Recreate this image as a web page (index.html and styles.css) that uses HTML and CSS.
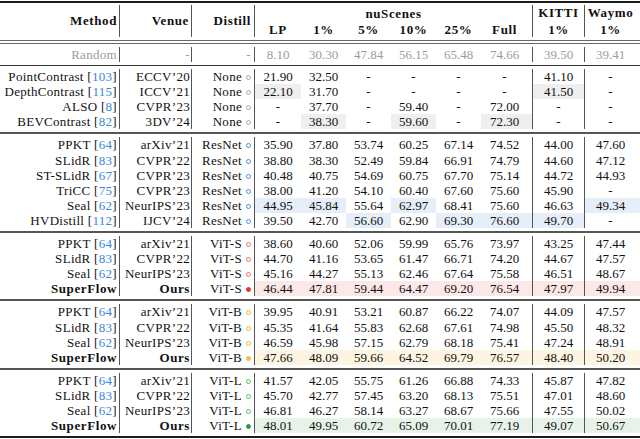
FILE: index.html
```html
<!DOCTYPE html>
<html lang="en">
<head>
<meta charset="utf-8">
<title>SuperFlow comparison table</title>
<link rel="stylesheet" href="styles.css">
</head>
<body>
<div class="tbl">
  <div class="rule top"></div>

  <div class="head">
    <div class="hc c-method span2">Method</div>
    <div class="hc c-venue span2">Venue</div>
    <div class="hc c-distill span2">Distill</div>
    <div class="hc nus">nuScenes</div>
    <div class="hc c-kitti">KITTI</div>
    <div class="hc c-waymo">Waymo</div>
    <div class="hc num">LP</div>
    <div class="hc num">1%</div>
    <div class="hc num">5%</div>
    <div class="hc num">10%</div>
    <div class="hc num">25%</div>
    <div class="hc num c-full">Full</div>
    <div class="hc num c-kitti">1%</div>
    <div class="hc num c-waymo">1%</div>
  </div>

  <div class="rule double"></div>

  <div class="group gray-text">
    <div class="row">
      <div class="c-method">Random</div><div class="c-venue">-</div><div class="c-distill">-</div>
      <div>8.10</div><div>30.30</div><div>47.84</div><div>56.15</div><div>65.48</div><div class="c-full">74.66</div><div class="c-kitti">39.50</div><div class="c-waymo">39.41</div>
    </div>
  </div>

  <div class="rule thin"></div>

  <div class="group">
    <div class="row">
      <div class="c-method">PointContrast [<span class="cite">103</span>]</div><div class="c-venue">ECCV’20</div><div class="c-distill">None<span class="dot d-none"></span></div>
      <div>21.90</div><div>32.50</div><div>-</div><div>-</div><div>-</div><div class="c-full">-</div><div class="c-kitti">41.10</div><div class="c-waymo">-</div>
    </div>
    <div class="row">
      <div class="c-method">DepthContrast [<span class="cite">115</span>]</div><div class="c-venue">ICCV’21</div><div class="c-distill">None<span class="dot d-none"></span></div>
      <div class="hl-gray">22.10</div><div>31.70</div><div>-</div><div>-</div><div>-</div><div class="c-full">-</div><div class="c-kitti hl-gray">41.50</div><div class="c-waymo">-</div>
    </div>
    <div class="row">
      <div class="c-method">ALSO [<span class="cite">8</span>]</div><div class="c-venue">CVPR’23</div><div class="c-distill">None<span class="dot d-none"></span></div>
      <div>-</div><div>37.70</div><div>-</div><div>59.40</div><div>-</div><div class="c-full">72.00</div><div class="c-kitti">-</div><div class="c-waymo">-</div>
    </div>
    <div class="row">
      <div class="c-method">BEVContrast [<span class="cite">82</span>]</div><div class="c-venue">3DV’24</div><div class="c-distill">None<span class="dot d-none"></span></div>
      <div>-</div><div class="hl-gray">38.30</div><div>-</div><div class="hl-gray">59.60</div><div>-</div><div class="c-full hl-gray">72.30</div><div class="c-kitti">-</div><div class="c-waymo">-</div>
    </div>
  </div>

  <div class="rule mid"></div>

  <div class="group">
    <div class="row">
      <div class="c-method">PPKT [<span class="cite">64</span>]</div><div class="c-venue">arXiv’21</div><div class="c-distill">ResNet<span class="dot d-blue"></span></div>
      <div>35.90</div><div>37.80</div><div>53.74</div><div>60.25</div><div>67.14</div><div class="c-full">74.52</div><div class="c-kitti">44.00</div><div class="c-waymo">47.60</div>
    </div>
    <div class="row">
      <div class="c-method">SLidR [<span class="cite">83</span>]</div><div class="c-venue">CVPR’22</div><div class="c-distill">ResNet<span class="dot d-blue"></span></div>
      <div>38.80</div><div>38.30</div><div>52.49</div><div>59.84</div><div>66.91</div><div class="c-full">74.79</div><div class="c-kitti">44.60</div><div class="c-waymo">47.12</div>
    </div>
    <div class="row">
      <div class="c-method">ST-SLidR [<span class="cite">67</span>]</div><div class="c-venue">CVPR’23</div><div class="c-distill">ResNet<span class="dot d-blue"></span></div>
      <div>40.48</div><div>40.75</div><div>54.69</div><div>60.75</div><div>67.70</div><div class="c-full">75.14</div><div class="c-kitti">44.72</div><div class="c-waymo">44.93</div>
    </div>
    <div class="row">
      <div class="c-method">TriCC [<span class="cite">75</span>]</div><div class="c-venue">CVPR’23</div><div class="c-distill">ResNet<span class="dot d-blue"></span></div>
      <div>38.00</div><div>41.20</div><div>54.10</div><div>60.40</div><div>67.60</div><div class="c-full">75.60</div><div class="c-kitti">45.90</div><div class="c-waymo">-</div>
    </div>
    <div class="row">
      <div class="c-method">Seal [<span class="cite">62</span>]</div><div class="c-venue">NeurIPS’23</div><div class="c-distill">ResNet<span class="dot d-blue"></span></div>
      <div class="hl-blue">44.95</div><div class="hl-blue">45.84</div><div>55.64</div><div class="hl-blue">62.97</div><div>68.41</div><div class="c-full">75.60</div><div class="c-kitti">46.63</div><div class="c-waymo hl-blue">49.34</div>
    </div>
    <div class="row">
      <div class="c-method">HVDistill [<span class="cite">112</span>]</div><div class="c-venue">IJCV’24</div><div class="c-distill">ResNet<span class="dot d-blue"></span></div>
      <div>39.50</div><div>42.70</div><div class="hl-blue">56.60</div><div>62.90</div><div class="hl-blue">69.30</div><div class="c-full hl-blue">76.60</div><div class="c-kitti hl-blue">49.70</div><div class="c-waymo">-</div>
    </div>
  </div>

  <div class="rule mid"></div>

  <div class="group">
    <div class="row">
      <div class="c-method">PPKT [<span class="cite">64</span>]</div><div class="c-venue">arXiv’21</div><div class="c-distill">ViT-S<span class="dot d-red"></span></div>
      <div>38.60</div><div>40.60</div><div>52.06</div><div>59.99</div><div>65.76</div><div class="c-full">73.97</div><div class="c-kitti">43.25</div><div class="c-waymo">47.44</div>
    </div>
    <div class="row">
      <div class="c-method">SLidR [<span class="cite">83</span>]</div><div class="c-venue">CVPR’22</div><div class="c-distill">ViT-S<span class="dot d-red"></span></div>
      <div>44.70</div><div>41.16</div><div>53.65</div><div>61.47</div><div>66.71</div><div class="c-full">74.20</div><div class="c-kitti">44.67</div><div class="c-waymo">47.57</div>
    </div>
    <div class="row">
      <div class="c-method">Seal [<span class="cite">62</span>]</div><div class="c-venue">NeurIPS’23</div><div class="c-distill">ViT-S<span class="dot d-red"></span></div>
      <div>45.16</div><div>44.27</div><div>55.13</div><div>62.46</div><div>67.64</div><div class="c-full">75.58</div><div class="c-kitti">46.51</div><div class="c-waymo">48.67</div>
    </div>
    <div class="row ours hl-row-red">
      <div class="c-method b">SuperFlow</div><div class="c-venue b">Ours</div><div class="c-distill">ViT-S<span class="dot d-red fill"></span></div>
      <div>46.44</div><div>47.81</div><div>59.44</div><div>64.47</div><div>69.20</div><div class="c-full">76.54</div><div class="c-kitti">47.97</div><div class="c-waymo">49.94</div>
    </div>
  </div>

  <div class="rule mid"></div>

  <div class="group">
    <div class="row">
      <div class="c-method">PPKT [<span class="cite">64</span>]</div><div class="c-venue">arXiv’21</div><div class="c-distill">ViT-B<span class="dot d-yellow"></span></div>
      <div>39.95</div><div>40.91</div><div>53.21</div><div>60.87</div><div>66.22</div><div class="c-full">74.07</div><div class="c-kitti">44.09</div><div class="c-waymo">47.57</div>
    </div>
    <div class="row">
      <div class="c-method">SLidR [<span class="cite">83</span>]</div><div class="c-venue">CVPR’22</div><div class="c-distill">ViT-B<span class="dot d-yellow"></span></div>
      <div>45.35</div><div>41.64</div><div>55.83</div><div>62.68</div><div>67.61</div><div class="c-full">74.98</div><div class="c-kitti">45.50</div><div class="c-waymo">48.32</div>
    </div>
    <div class="row">
      <div class="c-method">Seal [<span class="cite">62</span>]</div><div class="c-venue">NeurIPS’23</div><div class="c-distill">ViT-B<span class="dot d-yellow"></span></div>
      <div>46.59</div><div>45.98</div><div>57.15</div><div>62.79</div><div>68.18</div><div class="c-full">75.41</div><div class="c-kitti">47.24</div><div class="c-waymo">48.91</div>
    </div>
    <div class="row ours hl-row-yellow">
      <div class="c-method b">SuperFlow</div><div class="c-venue b">Ours</div><div class="c-distill">ViT-B<span class="dot d-yellow fill"></span></div>
      <div>47.66</div><div>48.09</div><div>59.66</div><div>64.52</div><div>69.79</div><div class="c-full">76.57</div><div class="c-kitti">48.40</div><div class="c-waymo">50.20</div>
    </div>
  </div>

  <div class="rule mid"></div>

  <div class="group">
    <div class="row">
      <div class="c-method">PPKT [<span class="cite">64</span>]</div><div class="c-venue">arXiv’21</div><div class="c-distill">ViT-L<span class="dot d-green"></span></div>
      <div>41.57</div><div>42.05</div><div>55.75</div><div>61.26</div><div>66.88</div><div class="c-full">74.33</div><div class="c-kitti">45.87</div><div class="c-waymo">47.82</div>
    </div>
    <div class="row">
      <div class="c-method">SLidR [<span class="cite">83</span>]</div><div class="c-venue">CVPR’22</div><div class="c-distill">ViT-L<span class="dot d-green"></span></div>
      <div>45.70</div><div>42.77</div><div>57.45</div><div>63.20</div><div>68.13</div><div class="c-full">75.51</div><div class="c-kitti">47.01</div><div class="c-waymo">48.60</div>
    </div>
    <div class="row">
      <div class="c-method">Seal [<span class="cite">62</span>]</div><div class="c-venue">NeurIPS’23</div><div class="c-distill">ViT-L<span class="dot d-green"></span></div>
      <div>46.81</div><div>46.27</div><div>58.14</div><div>63.27</div><div>68.67</div><div class="c-full">75.66</div><div class="c-kitti">47.55</div><div class="c-waymo">50.02</div>
    </div>
    <div class="row ours hl-row-green">
      <div class="c-method b">SuperFlow</div><div class="c-venue b">Ours</div><div class="c-distill">ViT-L<span class="dot d-green fill"></span></div>
      <div>48.01</div><div>49.95</div><div>60.72</div><div>65.09</div><div>70.01</div><div class="c-full">77.19</div><div class="c-kitti">49.07</div><div class="c-waymo">50.67</div>
    </div>
  </div>

  <div class="rule bottom"></div>
</div>
</body>
</html>
```

FILE: styles.css
```css
html, body {
  margin: 0;
  padding: 0;
  background: #ffffff;
}

.tbl {
  width: 640px;
  font-family: "Liberation Serif", "Times New Roman", serif;
  font-size: 13px;
  color: #111;
  --cols: 120px 72px 63px 46px 45px 45px 45px 45px 51px 52px 56px;
}

.rule.top {
  margin-top: 1px;
  height: 2px;
  background: #1c1c1c;
}
.rule.double {
  height: 2px;
  border-top: 1px solid #6a6a6a;
  border-bottom: 1px solid #6a6a6a;
}
.rule.thin {
  height: 1px;
  background: #333;
}
.rule.mid {
  height: 2px;
  background: #555;
}
.rule.bottom {
  height: 2px;
  background: #1c1c1c;
}

/* header */
.head {
  display: grid;
  grid-template-columns: var(--cols);
  grid-template-rows: 16px 16px;
  padding: 2px 0 3px;
  font-weight: bold;
  letter-spacing: 0.6px;
}
.hc {
  line-height: 16px;
  text-align: center;
  white-space: nowrap;
}
.head .span2 {
  grid-row: 1 / 3;
  display: flex;
  align-items: center;
  justify-content: flex-end;
  padding-right: 2px;
}
.head .c-method { grid-column: 1; }
.head .c-venue { grid-column: 2; }
.head .c-distill { grid-column: 3; padding-right: 3px; }
.head .nus { grid-column: 4 / 10; grid-row: 1; padding-top: 1px; }
.head .num { grid-row: 2; padding-top: 1px; }

/* groups and rows */
.group {
  padding: 3px 0;
}
.row {
  display: grid;
  grid-template-columns: var(--cols);
  height: 15.1px;
  line-height: 15.1px;
}
.row > div {
  text-align: center;
  white-space: nowrap;
}
.row .c-method, .row .c-venue, .row .c-distill {
  text-align: right;
  letter-spacing: 0.3px;
}

.c-method {
  border-right: 1px solid #555;
  padding-right: 2px;
}
.c-venue {
  border-right: 1px solid #555;
  padding-right: 1px;
}
.c-distill {
  border-right: 1px solid #555;
  padding-right: 3px;
}
.c-full {
  padding-right: 4px;
}
.c-kitti {
  border-left: 1px solid #555;
}
.c-waymo {
  border-left: 1px solid #555;
  padding-right: 4px;
}

.b {
  font-weight: bold;
  letter-spacing: 0.6px !important;
}

.gray-text {
  color: #9c9c9c;
}

.cite {
  color: #3a86d8;
}

/* distillation markers */
.dot {
  display: inline-block;
  width: 5px;
  height: 5px;
  box-sizing: border-box;
  border: 1px solid #aaa;
  border-radius: 50%;
  margin-left: 4px;
  vertical-align: 1px;
}
.d-none { border-color: #a8a8a8; }
.d-blue { border-color: #4a8fd8; }
.d-red { border-color: #e8735f; }
.d-yellow { border-color: #f0b43a; }
.d-green { border-color: #5cb867; }
.d-red.fill { background: #e8322c; border-color: #e8322c; }
.d-yellow.fill { background: #f5bf3a; border-color: #f5bf3a; }
.d-green.fill { background: #2a9a42; border-color: #2a9a42; }

/* highlighted cells */
.hl-gray { background: #efefef; }
.hl-blue { background: #e6eefa; }
.hl-row-red > div:nth-child(n+4) { background: #fce8e8; }
.hl-row-yellow > div:nth-child(n+4) { background: #fdf4e2; }
.hl-row-green > div:nth-child(n+4) { background: #e7f3e8; }
```
